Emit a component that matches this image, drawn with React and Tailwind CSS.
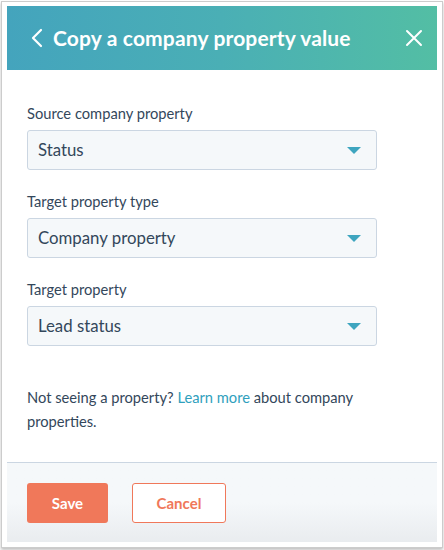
import React from 'react';

const FIELDS = [
  { label: 'Source company property', value: 'Status' },
  { label: 'Target property type', value: 'Company property' },
  { label: 'Target property', value: 'Lead status' },
];

function Select({ value }) {
  return (
    <div className="h-[40px] w-[350px] rounded-[3px] border border-[#cbd6e2] bg-[#f5f8fa] pl-[10px] pr-[15px] flex items-center justify-between">
      <span className="text-[16.8px] text-[#33475b]">{value}</span>
      <svg width="14" height="7" viewBox="0 0 14 7">
        <polygon points="0,0 14,0 7,7" fill="#3ea5bf" />
      </svg>
    </div>
  );
}

export default function App() {
  return (
    <div className="w-[444px] h-[550px] bg-white pt-px px-px" style={{ fontFamily: 'Lato, "Noto Sans", sans-serif' }}>
      <div className="h-[547px] border border-[#cccccc] shadow-[0_2px_3px_rgba(0,0,0,0.25)] pt-[4px] px-[5px]">
        <div className="w-[430px] h-[536px] flex flex-col">
          {/* header */}
          <div className="h-[64px] bg-gradient-to-r from-[#44a4bd] via-[#4aafb5] to-[#53bea4] flex items-center pl-[24px] pr-[14px]">
            <svg width="12" height="20" viewBox="0 0 12 20" className="mr-[10px]">
              <path d="M10 2 L2 10 L10 18" stroke="white" strokeWidth="2.2" fill="none" strokeLinecap="round" strokeLinejoin="round" />
            </svg>
            <h1 className="text-white text-[21px] font-bold tracking-[0.15px]">Copy a company property value</h1>
            <svg width="18" height="18" viewBox="0 0 18 18" className="ml-auto">
              <path d="M2 2 L16 16 M16 2 L2 16" stroke="white" strokeWidth="2" strokeLinecap="round" />
            </svg>
          </div>

          {/* body */}
          <div className="flex-1 bg-white pt-[33px] px-[20px]">
            {FIELDS.map((f, i) => (
              <div key={i} className={i > 0 ? 'mt-[21px]' : ''}>
                <div className="text-[14.7px] leading-[20px] text-[#33475b] mb-[7px]">{f.label}</div>
                <Select value={f.value} />
              </div>
            ))}
            <p className="mt-[39px] w-[350px] text-[14.7px] leading-[24px] text-[#33475b]">
              Not seeing a property? <span className="text-[#2f9fbd]">Learn more</span> about company properties.
            </p>
          </div>

          {/* footer */}
          <div className="h-[80px] border-t border-[#cbd6e2] bg-gradient-to-b from-[#f5f8fa] via-[#f5f8fa] to-[#e9ecef] pt-[20px] px-[20px] flex gap-[24px] items-start">
            <button className="w-[81px] h-[40px] rounded-[3px] bg-[#f0785a] text-white text-[15px] font-bold">Save</button>
            <button className="w-[94px] h-[40px] rounded-[3px] border border-[#f0785a] bg-white text-[#f0785a] text-[15px] font-bold">Cancel</button>
          </div>
        </div>
      </div>
    </div>
  );
}
